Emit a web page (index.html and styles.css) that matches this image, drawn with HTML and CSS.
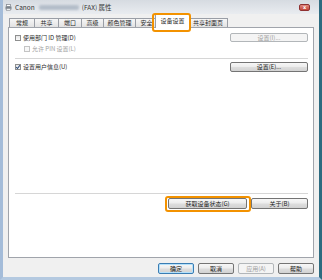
FILE: index.html
```html
<!DOCTYPE html>
<html lang="zh-CN">
<head>
<meta charset="utf-8">
<link rel="stylesheet" href="styles.css">
</head>
<body>
<div class="window">
  <div class="titlebar">
    <svg class="ticon" width="7" height="7" viewBox="0 0 7 7">
      <rect x="1.5" y="0.5" width="4" height="2" fill="#fff" stroke="#8a8f96" stroke-width="0.8"/>
      <rect x="0.5" y="2.5" width="6" height="3" fill="#7d848c"/>
      <rect x="1.5" y="4.5" width="4" height="2" fill="#e9ecef" stroke="#8a8f96" stroke-width="0.6"/>
    </svg>
    <span class="ttext">Canon</span>
    <span class="blurbox"></span>
    <span class="ttext">(FAX) 属性</span>
    <span class="close">x</span>
  </div>
  <div class="tabs">
    <div class="tab t1">常规</div>
    <div class="tab t2">共享</div>
    <div class="tab t3">端口</div>
    <div class="tab t4">高级</div>
    <div class="tab t5">颜色管理</div>
    <div class="tab t6">安全</div>
    <div class="tab sel">设备设置</div>
    <div class="tab t8">共享封面页</div>
  </div>
  <div class="panel">
    <div class="row r1">
      <span class="box"></span>
      <span class="lbl">使用部门 ID 管理(D)</span>
      <button class="btn dis setbtn">设置(I)...</button>
    </div>
    <div class="row r2">
      <span class="box disbox"></span>
      <span class="lbl dtext">允许 PIN 设置(L)</span>
    </div>
    <div class="sep s1"></div>
    <div class="row r3">
      <span class="box">
        <svg width="6" height="6" viewBox="0 0 6 6"><path d="M1.2 3.1 L2.5 4.5 L4.9 1.2" fill="none" stroke="#2b4a78" stroke-width="1.1"/></svg>
      </span>
      <span class="lbl">设置用户信息(U)</span>
      <button class="btn setbtn">设置(E)...</button>
    </div>
    <div class="spacer"></div>
    <div class="sep"></div>
    <div class="row r4">
      <button class="btn getbtn">获取设备状态(G)</button>
      <button class="btn aboutbtn">关于(B)</button>
    </div>
  </div>
  <div class="footer">
    <button class="btn fbtn default">确定</button>
    <button class="btn fbtn">取消</button>
    <button class="btn fbtn dis">应用(A)</button>
    <button class="btn fbtn">帮助</button>
  </div>
</div>
<div class="hl hl-tab"></div>
<div class="hl hl-btn"></div>
</body>
</html>
```
FILE: styles.css
```css
html, body {
  margin: 0;
  padding: 0;
  width: 322px;
  height: 280px;
  overflow: hidden;
  background: #f0f0f0;
}
body {
  font-family: "Noto Sans CJK SC", "Noto Sans", sans-serif;
  font-size: 6px;
  color: #2a2a2a;
}
.window {
  box-sizing: border-box;
  width: 322px;
  height: 280px;
  display: flex;
  flex-direction: column;
  background: #f0f0f0;
  border-left: 3px solid #a4bcd9;
  border-right: 3px solid #2c6b80;
  border-bottom: 3px solid #b4c9e0;
  padding: 0 5px 0 5px;
}
.titlebar {
  height: 14px;
  margin: 0 -5px;
  padding: 0 0 0 2px;
  display: flex;
  align-items: center;
  background: linear-gradient(#d6dbe1, #e9ecf0);
  box-sizing: border-box;
}
.ticon { margin-right: 3px; flex: none; }
.ttext { font-size: 6.5px; color: #333; line-height: 8px; white-space: nowrap; }
.blurbox {
  width: 40px;
  height: 5px;
  margin: 0 3px 0 4px;
  background: #b3bdc9;
  border-radius: 2px;
  filter: blur(0.8px);
}
.close {
  margin-left: auto;
  margin-right: 9px;
  width: 11px;
  height: 7px;
  box-sizing: border-box;
  border: 1px solid #8f3030;
  border-radius: 2px;
  background: linear-gradient(#e08a80, #c4463a);
  color: #fff;
  font-family: "DejaVu Sans", sans-serif;
  font-size: 5px;
  font-weight: bold;
  line-height: 5px;
  text-align: center;
}
.tabs {
  height: 13px;
  display: flex;
  align-items: flex-end;
  padding-left: 1px;
  position: relative;
  z-index: 2;
}
.tab {
  box-sizing: border-box;
  height: 9px;
  border: 1px solid #9a9ea6;
  border-bottom: none;
  margin-right: -1px;
  background: linear-gradient(#f6f6f6, #e2e2e2);
  text-align: center;
  line-height: 8px;
  white-space: nowrap;
  color: #2a2a2a;
}
.t1 { width: 26px; }
.t2 { width: 25px; }
.t3 { width: 24px; }
.t4 { width: 23px; }
.t5 { width: 33px; }
.t6 { width: 23px; }
.t8 { width: 40px; }
.tab.sel {
  width: 35px;
  height: 14px;
  margin-left: -2px;
  margin-right: -2px;
  margin-bottom: -1px;
  background: #fff;
  position: relative;
  z-index: 3;
  line-height: 11px;
}
.panel {
  box-sizing: border-box;
  height: 231px;
  background: #fff;
  border: 1px solid #a0a4ab;
  display: flex;
  flex-direction: column;
  padding: 5px 5px 48px 6px;
}
.row {
  display: flex;
  align-items: center;
  height: 9px;
  line-height: 8px;
  white-space: nowrap;
}
.box {
  box-sizing: border-box;
  width: 6px;
  height: 6px;
  border: 1px solid #8e8f8f;
  background: linear-gradient(#e6e6e6, #fbfbfb);
  margin-right: 2px;
  flex: none;
  position: relative;
}
.box svg { position: absolute; left: -1px; top: -1px; }
.disbox { border-color: #c4c4c4; background: #f7f7f7; }
.dtext { color: #a3a3a3; }
.r2 { margin-top: 2px; padding-left: 9px; }
.sep {
  height: 1px;
  background: #d6d6d6;
  margin-right: 0;
  flex: none;
}
.s1 { margin-top: 5px; }
.r3 { margin-top: 3px; height: 10px; }
.spacer { flex: 1; }
.r4 { margin-top: 4px; height: 11px; justify-content: flex-end; }
.btn {
  box-sizing: border-box;
  height: 10px;
  padding: 0;
  border: 1px solid #747474;
  border-radius: 2px;
  background: linear-gradient(#f7f7f7 0%, #ececec 48%, #dedede 52%, #d2d2d2 100%);
  font-family: "Noto Sans CJK SC", "Noto Sans", sans-serif;
  font-size: 6px;
  line-height: 8px;
  color: #222;
  white-space: nowrap;
}
.btn.dis {
  border-color: #b2b6b9;
  background: #f4f4f4;
  color: #a0a0a0;
}
.setbtn { margin-left: auto; width: 78px; }
.r1 .setbtn { height: 9px; }
.getbtn { width: 79px; height: 11px; margin-right: 4px; }
.aboutbtn { width: 57px; height: 11px; }
.footer {
  flex: 1;
  display: flex;
  justify-content: flex-end;
  align-items: flex-start;
  gap: 4px;
  padding-top: 5px;
}
.fbtn { width: 36px; height: 11px; }
.btn.default {
  border-color: #3a7db3;
  box-shadow: inset 0 0 0 1px #b5e1fb;
}
.hl {
  position: absolute;
  box-sizing: border-box;
  border: 2px solid #f39200;
  border-radius: 3px;
  z-index: 10;
}
.hl-tab { left: 152px; top: 13px; width: 39px; height: 19px; }
.hl-btn { left: 165px; top: 196px; width: 86px; height: 16px; }
```
